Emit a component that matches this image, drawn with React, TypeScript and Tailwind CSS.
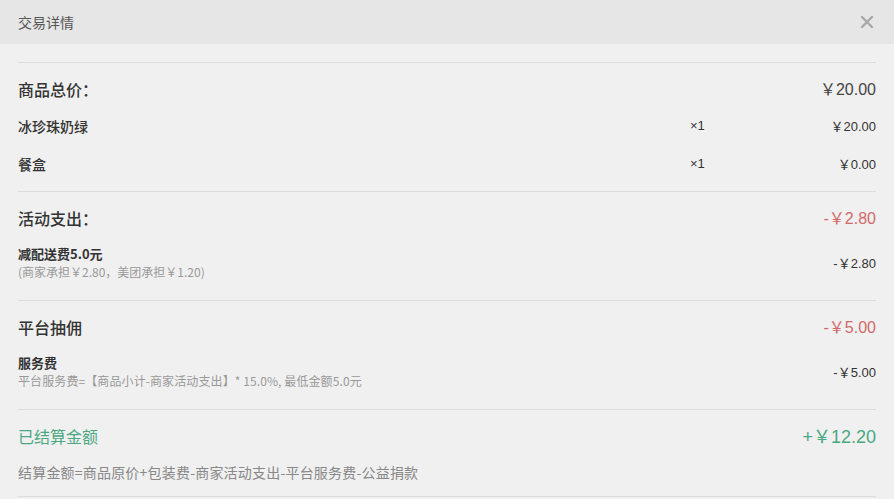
import React from "react";

const font = { fontFamily: '"Noto Sans CJK SC", "Noto Sans", sans-serif' };
const num = { fontFamily: '"Liberation Sans", "Noto Sans CJK SC", sans-serif' };

const Divider: React.FC = () => <div className="h-px bg-[#dcdcdc]" />;

const Money: React.FC<{ sign?: string; value: string; className?: string }> = ({ sign, value, className }) => (
  <span className={className} style={num}>
    {sign ?? ""}
    <span style={font}>￥</span>
    {value}
  </span>
);

export default function App() {
  return (
    <div className="w-[894px] h-[499px] bg-[#f0f0f0] text-[#333] overflow-hidden" style={font}>
      <div className="h-[44px] bg-[#e6e6e6] flex items-center justify-between pl-[18px] pr-[18px]">
        <span className="text-[14px] text-[#555]">交易详情</span>
        <svg width="14" height="14" viewBox="0 0 14 14" className="mr-[2px]">
          <path d="M2 2 L12 12 M12 2 L2 12" stroke="#a8a8a8" strokeWidth="2.4" strokeLinecap="round" />
        </svg>
      </div>

      <div className="px-[18px] pt-[18px]">
        <Divider />

        <div className="flex items-center justify-between h-[52px]">
          <span className="text-[16px] font-medium">商品总价：</span>
          <Money value="20.00" className="text-[16px] text-[#444]" />
        </div>
        <div className="flex items-center h-[22px]">
          <span className="flex-1 text-[14px] font-medium">冰珍珠奶绿</span>
          <div className="w-[186px] flex justify-between text-[13px]">
            <span style={num}>×1</span>
            <Money value="20.00" />
          </div>
        </div>
        <div className="flex items-center h-[22px] mt-[16px]">
          <span className="flex-1 text-[14px] font-medium">餐盒</span>
          <div className="w-[186px] flex justify-between text-[13px]">
            <span style={num}>×1</span>
            <Money value="0.00" />
          </div>
        </div>
        <div className="mt-[16px]"><Divider /></div>

        <div className="flex items-center justify-between h-[52px]">
          <span className="text-[16px] font-medium">活动支出：</span>
          <Money sign="-" value="2.80" className="text-[16px] text-[#d06a6a]" />
        </div>
        <div className="flex items-center justify-between pt-[1px]">
          <div className="flex flex-col">
            <span className="text-[13px] font-bold leading-[18px]">减配送费5.0元</span>
            <span className="text-[12px] text-[#999] leading-[18px]">(商家承担￥2.80，美团承担￥1.20)</span>
          </div>
          <Money sign="-" value="2.80" className="text-[13px]" />
        </div>
        <div className="mt-[19px]"><Divider /></div>

        <div className="flex items-center justify-between h-[52px]">
          <span className="text-[16px] font-medium">平台抽佣</span>
          <Money sign="-" value="5.00" className="text-[16px] text-[#d06a6a]" />
        </div>
        <div className="flex items-center justify-between pt-[1px]">
          <div className="flex flex-col">
            <span className="text-[13px] font-bold leading-[18px]">服务费</span>
            <span className="text-[12px] text-[#999] leading-[18px] tracking-[0.1px]">平台服务费=【商品小计-商家活动支出】* 15.0%, 最低金额5.0元</span>
          </div>
          <Money sign="-" value="5.00" className="text-[13px]" />
        </div>
        <div className="mt-[19px]"><Divider /></div>

        <div className="flex items-center justify-between h-[52px]">
          <span className="text-[16px] text-[#4aa883]">已结算金额</span>
          <Money sign="+" value="12.20" className="text-[18px] text-[#4aa883]" />
        </div>
        <div className="text-[14px] text-[#888] h-[20px] flex items-center tracking-[0.2px]">结算金额=商品原价+包装费-商家活动支出-平台服务费-公益捐款</div>
        <div className="mt-[14px]"><Divider /></div>
      </div>
    </div>
  );
}
